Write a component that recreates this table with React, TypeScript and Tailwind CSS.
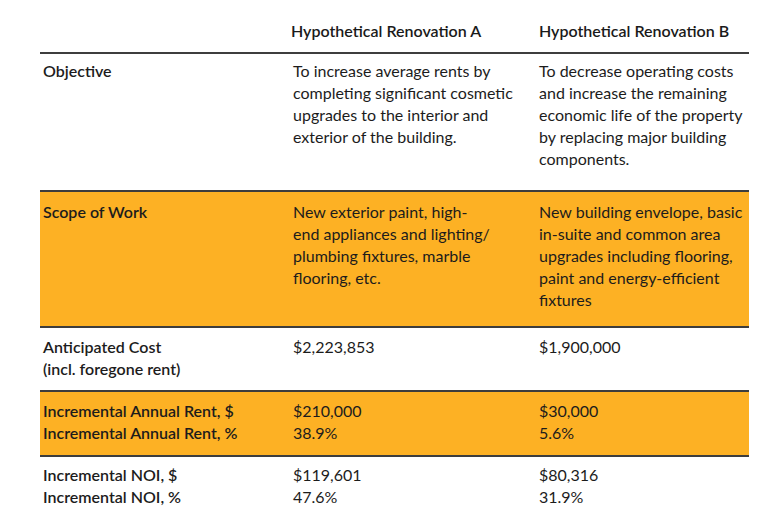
import React from "react";

const font = { fontFamily: "Lato, 'Noto Sans', sans-serif" };

type Row = {
  label: string[];
  a: string[];
  b: string[];
  orange?: boolean;
  pt: string;
  pb: string;
};

const rows: Row[] = [
  {
    label: ["Objective"],
    a: [
      "To increase average rents by",
      "completing significant cosmetic",
      "upgrades to the interior and",
      "exterior of the building.",
    ],
    b: [
      "To decrease operating costs",
      "and increase the remaining",
      "economic life of the property",
      "by replacing major building",
      "components.",
    ],
    pt: "pt-[6px]",
    pb: "pb-[20px]",
  },
  {
    label: ["Scope of Work"],
    a: [
      "New exterior paint, high-",
      "end appliances and lighting/",
      "plumbing fixtures, marble",
      "flooring, etc.",
    ],
    b: [
      "New building envelope, basic",
      "in-suite and common area",
      "upgrades including flooring,",
      "paint and energy-efficient",
      "fixtures",
    ],
    orange: true,
    pt: "pt-[9px]",
    pb: "pb-[15px]",
  },
  {
    label: ["Anticipated Cost", "(incl. foregone rent)"],
    a: ["$2,223,853"],
    b: ["$1,900,000"],
    pt: "pt-[8px]",
    pb: "pb-[10px]",
  },
  {
    label: ["Incremental Annual Rent, $", "Incremental Annual Rent, %"],
    a: ["$210,000", "38.9%"],
    b: ["$30,000", "5.6%"],
    orange: true,
    pt: "pt-[8px]",
    pb: "pb-[11px]",
  },
  {
    label: ["Incremental NOI, $", "Incremental NOI, %"],
    a: ["$119,601", "47.6%"],
    b: ["$80,316", "31.9%"],
    pt: "pt-[7px]",
    pb: "pb-[12px]",
  },
];

function Lines({ lines }: { lines: string[] }) {
  return (
    <>
      {lines.map((l, i) => (
        <div key={i} className="whitespace-nowrap">
          {l}
        </div>
      ))}
    </>
  );
}

export default function App() {
  return (
    <div className="w-[774px] h-[523px] bg-white overflow-hidden" style={font}>
      <div className="ml-[40px] w-[709px] text-[16px] leading-[22px] text-[#1c1c1c]">
        <div className="grid grid-cols-[249px_247px_213px] pt-[20px] pb-[10px] font-semibold text-[#1a1a1a]">
          <div />
          <div className="pl-[2px]">Hypothetical Renovation A</div>
          <div className="pl-[3px]">Hypothetical Renovation B</div>
        </div>
        {rows.map((r, i) => (
          <div
            key={i}
            className={`grid grid-cols-[249px_247px_213px] border-t-2 border-[#3d3d3d] ${r.pt} ${r.pb} ${
              r.orange ? "bg-[#fdb124]" : "bg-white"
            }`}
          >
            <div className="pl-[3px] font-semibold">
              <Lines lines={r.label} />
            </div>
            <div className="pl-[4px]">
              <Lines lines={r.a} />
            </div>
            <div className="pl-[3px]">
              <Lines lines={r.b} />
            </div>
          </div>
        ))}
      </div>
    </div>
  );
}
